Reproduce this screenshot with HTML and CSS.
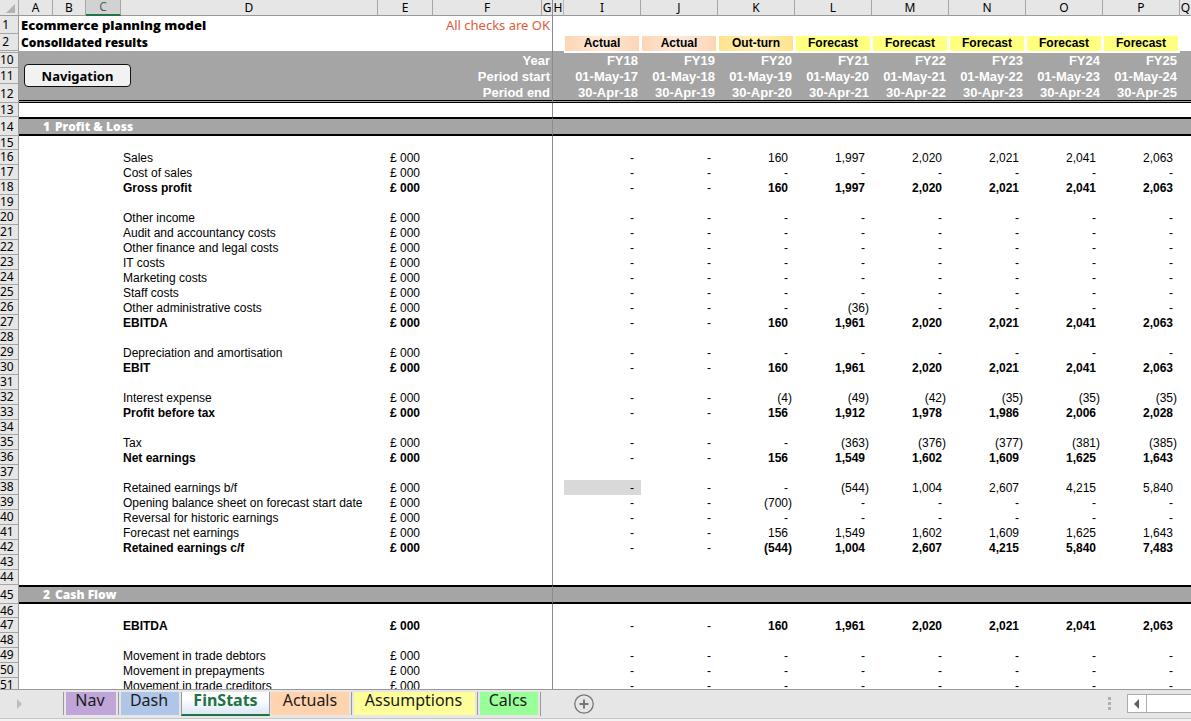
FILE: index.html
```html
<!DOCTYPE html>
<html lang="en">
<head>
<meta charset="utf-8">
<title>Ecommerce planning model</title>
<link rel="stylesheet" href="styles.css">
</head>
<body>
<main class="sheet">
<table class="grid">
<colgroup>
<col class="c-num"><col class="c-a"><col class="c-b"><col class="c-c"><col class="c-d"><col class="c-e"><col class="c-f"><col class="c-g"><col class="c-h">
<col class="c-year" span="8"><col>
</colgroup>
<thead>
<tr class="letters">
<th class="corner"><svg width="10" height="10" viewBox="0 0 10 10"><path d="M9 0v9H0z" fill="#b2b2b2"/></svg></th>
<th>A</th><th>B</th><th class="selected">C</th><th>D</th><th>E</th><th>F</th><th class="freeze">G</th><th class="tight">H</th><th>I</th><th>J</th><th>K</th><th>L</th><th>M</th><th>N</th><th>O</th><th>P</th><th class="tight last">Q</th>
</tr>
</thead>
<tbody id="rows"></tbody>
</table>
</main>
<footer class="tabbar">
<svg class="arrow" width="6" height="10" viewBox="0 0 6 10"><path d="M0 0l5 5-5 5z" fill="#bcbcbc"/></svg>
<nav class="tabs">
<a class="tab nav" href="#nav">Nav</a>
<a class="tab dash" href="#dash">Dash</a>
<a class="tab active" href="#finstats">FinStats</a>
<a class="tab actuals" href="#actuals">Actuals</a>
<a class="tab assumptions" href="#assumptions">Assumptions</a>
<a class="tab calcs" href="#calcs">Calcs</a>
</nav>
<button class="add" aria-label="New sheet"><svg width="20" height="20" viewBox="0 0 20 20" fill="none" stroke="#777"><circle cx="10" cy="10" r="9.2" stroke-width="1.3"/><path d="M10 5.500v9M5.500 10h9" stroke-width="2"/></svg></button>
<svg class="dots" width="3" height="13" viewBox="0 0 3 13" fill="#b0b0b0"><path d="M0 0h3v3H0zM0 5h3v3H0zM0 10h3v3H0z"/></svg>
<div class="scroll"><button class="scroll-left" aria-label="Scroll left"><svg width="6" height="10" viewBox="0 0 6 10"><path d="M5 0v10L0 5z" fill="#606060"/></svg></button></div>
</footer>
<script src="rows.js"></script>
</body>
</html>
```
FILE: styles.css
```css
* { box-sizing: border-box; }
body {
  margin: 0;
  height: 100vh;
  display: flex;
  flex-direction: column;
  background: #fff;
  color: #000;
  font-family: "Liberation Sans", Arial, sans-serif;
  font-size: 12px;
  overflow: hidden;
}
.sheet { flex: 1; min-height: 0; overflow: hidden; }

.grid { width: 100%; table-layout: fixed; border-collapse: separate; border-spacing: 0; }
.c-num { width: 19px; }
.c-a { width: 34px; }
.c-b { width: 33px; }
.c-c { width: 35px; }
.c-d { width: 257px; }
.c-e { width: 55px; }
.c-f { width: 109px; }
.c-g { width: 11px; }
.c-h { width: 11px; }
.c-year { width: 77px; }

th, td { padding: 0; line-height: 14px; white-space: nowrap; font-weight: 400; text-align: left; }
tr { height: 15px; }

.letters { height: 16px; }
.letters th {
  background: #e6e6e6;
  border-right: 1px solid #a6a6a6;
  border-bottom: 1px solid #999;
  font: 12px/15px "Noto Sans", sans-serif;
  text-align: center;
}
.letters .selected { background: #d2d2d2; color: #4a6b58; border-bottom: 2px solid #217346; line-height: 14px; }
.letters .tight { border-right-color: #a9bdb1; }
.letters .last { border-right: 0; }
.corner svg { display: block; margin: 3px 0 0 6px; }

.num {
  background: #e6e6e6;
  border-right: 1px solid #999;
  border-bottom: 1px solid #a6a6a6;
  font: 12px/14px "Noto Sans", sans-serif;
  padding-right: 6px;
  text-align: right;
}
.num.single { padding-right: 9px; }
.letters .freeze, .freeze { border-right: 1px solid #8c8c8c; }

.title { height: 18px; }
.subtitle { height: 17px; }
.heading { padding-left: 2px; font-family: "Open Sans", sans-serif; font-weight: 800; line-height: 16px; }
.title .heading { font-size: 13px; }
.subtitle .heading { font-size: 12px; }
.status { color: #e05a3c; font: 13px/17px "Noto Sans", sans-serif; text-align: right; padding-right: 2px; }

.chip { display: block; margin: 1px 2px 0 1px; font-weight: 700; text-align: center; line-height: 15px; }
.chip.actual { background: linear-gradient(90deg, #fcd5b4, #fdeadb 50%, #fcd5b4); }
.chip.outturn { background: linear-gradient(90deg, #ffe38a, #fff0b8 50%, #ffe38a); }
.chip.forecast { background: #ffff80; }

.spacer, .spacer th, .spacer td { height: 2px; line-height: 0; }
.shade { background: #a5a5a5; }
.period .shade { color: #fff; font-size: 13px; font-weight: 700; line-height: 15px; text-align: right; padding-right: 3px; }
.period .freeze { padding-right: 2px; }
.row11 { height: 16px; }
.row12 { height: 19px; }
.row12 .shade { border-bottom: 3px double #000; padding-top: 1px; }
.row12 .num, .band .num { line-height: 16px; padding-top: 2px; }
.short { height: 14px; }
.short .num { line-height: 13px; }

.period .nav-cell { border-bottom: 3px double #000; vertical-align: top; text-align: left; padding: 11px 0 0 5px; }
.nav-button {
  display: block;
  width: 107px;
  height: 23px;
  padding: 0;
  border: 1px solid #111;
  border-radius: 4px;
  background: #f2f2f2;
  color: #000;
  font: 700 13px/20px "Noto Sans", sans-serif;
}

.band { height: 19px; }
.band .shade { border-top: 2px solid #000; border-bottom: 2px solid #000; color: #fff; font: 800 12px/14px "Open Sans", sans-serif; padding-top: 1px; }
.band .index { text-align: right; padding-right: 3px; }
.band .name { padding-left: 2px; }

.label { padding-left: 2px; }
.unit { padding-left: 12px; }
.value { text-align: right; padding-right: 7px; }
.value.negative { padding-right: 3px; }
.value.highlight { background: #d9d9d9; }
.total .label, .total .unit, .total .value { font-weight: 700; }
.total .value.nil { font-weight: 400; }

.tabbar {
  height: 32px;
  flex: none;
  display: flex;
  background: #e6e6e6;
  border-top: 1px solid #999;
  box-shadow: inset 0 -2px #f3f3f3, inset 0 -3px #c6c6c6;
  padding-top: 2px;
}
.arrow { flex: none; margin: 7px 40px 0 17px; }
.tabs { display: flex; flex: none; gap: 1px; height: 24px; padding-right: 1px; border-right: 1px solid #999; }
.tab {
  height: 23px;
  color: #1a1a1a;
  font: 16px/17px "Noto Sans", sans-serif;
  text-align: center;
  text-decoration: none;
  border-left: 1px solid #999;
  border-right: 1px solid #e6e6e6;
  box-shadow: inset 2px 0 #e6e6e6;
}
.nav { width: 54px; background: #c0a5d8; }
.dash { width: 62px; background: #b0c6e8; }
.active {
  width: 89px;
  height: 24px;
  color: #217346;
  font-weight: 700;
  background: linear-gradient(#fff 30%, #dce6f5);
  border-right: 1px solid #999;
  border-bottom: 2px solid #217346;
  box-shadow: none;
}
.actuals { width: 79px; background: #ffd3ad; border-left: 0; box-shadow: none; }
.assumptions { width: 125px; background: #ffff99; }
.calcs { width: 62px; background: #99ff99; }
.add { flex: none; width: 20px; height: 20px; margin: 2px 0 0 33px; padding: 0; border: 0; background: none; }
.add svg { display: block; }
.dots { flex: none; margin: 5px 16px 0 auto; }
.scroll { flex: none; width: 64px; height: 19px; margin-top: 2px; border: 1px solid #ababab; border-right: 0; background: #fff; }
.scroll-left { width: 19px; height: 17px; padding: 0; border: 0; border-right: 1px solid #ababab; background: #fff; display: grid; place-items: center; }
```
FILE: rows.js
```js
const body = document.getElementById("rows");
const num = n => `<th class="num${String(n).length < 2 ? " single" : ""}">${n}</th>`;
const add = (cls, html) => body.insertAdjacentHTML("beforeend", `<tr class="${cls}">${html}</tr>`);

const dash = "- - - - - - - -";
const years = [18, 19, 20, 21, 22, 23, 24, 25];
const kinds = ["Actual", "Actual", "Out-turn", "Forecast", "Forecast", "Forecast", "Forecast", "Forecast"];

const period = (n, label, values, lead = "") =>
  `<tr class="period row${n}">` + num(n) + lead + `<td class="shade freeze" colspan="3">${label}</td><td class="shade"></td>` +
    values.map(v => `<td class="shade">${v}</td>`).join("") + `<td class="shade"></td></tr>`;

const band = (n, index, name) =>
  add("band", num(n) + `<td class="shade index">${index}</td><td class="shade name" colspan="3">${name}</td><td class="shade freeze" colspan="3"></td><td class="shade" colspan="10"></td>`);

const blank = (n, cls = "") =>
  add(cls, num(n) + `<td colspan="7" class="freeze"></td><td colspan="10"></td>`);

const valueClass = (v, marked) =>
  "value" + (v[0] === "(" ? " negative" : "") + (v === "-" ? " nil" : "") + (marked ? " highlight" : "");

const line = (n, label, values, total) =>
  add(total ? "total" : "", num(n) + `<td></td><td></td><td></td><td class="label">${label}</td><td class="unit">£ 000</td><td></td><td class="freeze"></td><td></td>` +
    values.split(" ").map((v, i) => `<td class="${valueClass(v, n === 38 && i === 0)}">${v}</td>`).join("") + "<td></td>");

add("title", num(1) + `<td class="heading" colspan="4">Ecommerce planning model</td><td class="status freeze" colspan="3">All checks are OK</td><td colspan="10"></td>`);
add("subtitle", num(2) + `<td class="heading" colspan="4">Consolidated results</td><td class="freeze" colspan="3"></td><td></td>` +
  kinds.map(k => `<td><span class="chip ${k.toLowerCase().replace("-", "")}">${k}</span></td>`).join("") + "<td></td>");
add("spacer", `<th class="num"></th><td class="shade freeze" colspan="7"></td><td class="shade"></td><td colspan="8"></td><td class="shade"></td>`);
body.insertAdjacentHTML("beforeend",
  period(10, "Year", years.map(y => `FY${y}`), `<td class="shade nav-cell" colspan="4" rowspan="3"><button class="nav-button">Navigation</button></td>`) +
  period(11, "Period start", years.map(y => `01-May-${y - 1}`)) +
  period(12, "Period end", years.map(y => `30-Apr-${y}`)));
blank(13, "short");
band(14, 1, "Profit &amp; Loss");
blank(15, "short");

const sales = "- - 160 1,997 2,020 2,021 2,041 2,063";
const ebitda = "- - 160 1,961 2,020 2,021 2,041 2,063";
const net = "- - 156 1,549 1,602 1,609 1,625 1,643";
const profitAndLoss = [
  ["Sales", sales],
  ["Cost of sales", dash],
  ["Gross profit", sales, true],
  null,
  ["Other income", dash],
  ["Audit and accountancy costs", dash],
  ["Other finance and legal costs", dash],
  ["IT costs", dash],
  ["Marketing costs", dash],
  ["Staff costs", dash],
  ["Other administrative costs", "- - - (36) - - - -"],
  ["EBITDA", ebitda, true],
  null,
  ["Depreciation and amortisation", dash],
  ["EBIT", ebitda, true],
  null,
  ["Interest expense", "- - (4) (49) (42) (35) (35) (35)"],
  ["Profit before tax", "- - 156 1,912 1,978 1,986 2,006 2,028", true],
  null,
  ["Tax", "- - - (363) (376) (377) (381) (385)"],
  ["Net earnings", net, true],
  null,
  ["Retained earnings b/f", "- - - (544) 1,004 2,607 4,215 5,840"],
  ["Opening balance sheet on forecast start date", "- - (700) - - - - -"],
  ["Reversal for historic earnings", dash],
  ["Forecast net earnings", net],
  ["Retained earnings c/f", "- - (544) 1,004 2,607 4,215 5,840 7,483", true],
  null,
  null
];
const cashFlow = [
  ["EBITDA", ebitda, true],
  null,
  ["Movement in trade debtors", dash],
  ["Movement in prepayments", dash],
  ["Movement in trade creditors", dash]
];
const fill = (start, rows) => rows.forEach((r, i) => r ? line(start + i, ...r) : blank(start + i));

fill(16, profitAndLoss);
band(45, 2, "Cash Flow");
blank(46, "short");
fill(47, cashFlow);
```
